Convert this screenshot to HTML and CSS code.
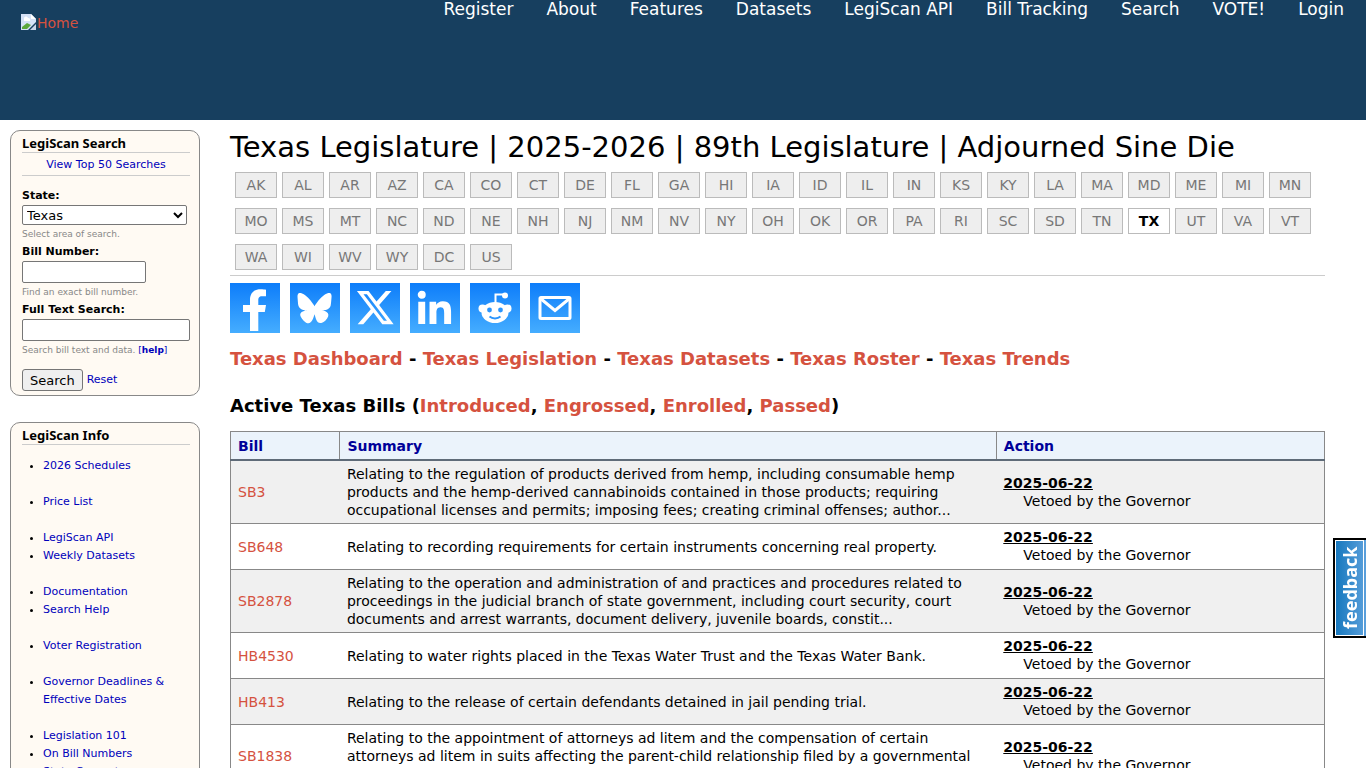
FILE: index.html
```html
<!DOCTYPE html>
<html lang="en">
<head>
    <meta charset="UTF-8">
    <meta name="viewport" content="width=device-width, initial-scale=1.0">
    <title>Texas Legislature | 2025-2026 | 89th Legislature | LegiScan</title>
    <link rel="stylesheet" href="styles.css">
</head>
<body>

<header class="header">
    <a class="logo" href="/">
        <svg width="16" height="16" viewBox="0 0 16 16" aria-hidden="true">
            <path d="M0 0h10l5 5v3l-8 8H0z" fill="#d5e2f7"/>
            <path d="M10 0v5h5z" fill="#fff"/>
            <path d="M3 5a2 2 0 0 1 4-1 2 2 0 0 1 2 3H3z" fill="#fff"/>
            <path d="M1 15v-2l5-4 4 2-4 4z" fill="#5ba83c"/>
            <path d="M15 10v6H9z" fill="#c9d6ea"/>
        </svg><span>Home</span>
    </a>
    <nav class="menu">
        <a href="/register">Register</a>
        <a href="/about">About</a>
        <a href="/features">Features</a>
        <a href="/datasets">Datasets</a>
        <a href="/legiscan">LegiScan API</a>
        <a href="/tracking">Bill Tracking</a>
        <a href="/search">Search</a>
        <a href="/vote">VOTE!</a>
        <a href="/login">Login</a>
    </nav>
</header>

<div class="page">
    <aside class="sidebar">
        <section class="block">
            <h2>LegiScan Search</h2>
            <a class="top-searches" href="/trends">View Top 50 Searches</a>
            <form class="search-form" action="/search">
                <label for="state">State:</label>
                <select id="state">
                    <option>Texas</option>
                </select>
                <p class="hint">Select area of search.</p>

                <label for="bill">Bill Number:</label>
                <input class="short" type="text" id="bill">
                <p class="hint">Find an exact bill number.</p>

                <label for="fulltext">Full Text Search:</label>
                <input type="text" id="fulltext">
                <p class="hint">Search bill text and data. <a href="/help">[<b>help</b>]</a></p>

                <div class="actions">
                    <button type="submit">Search</button>
                    <a href="/reset">Reset</a>
                </div>
            </form>
        </section>

        <section class="block">
            <h2>LegiScan Info</h2>
            <ul>
                <li><a href="#">2026 Schedules</a></li>
            </ul>
            <ul>
                <li><a href="#">Price List</a></li>
            </ul>
            <ul>
                <li><a href="#">LegiScan API</a></li>
                <li><a href="#">Weekly Datasets</a></li>
            </ul>
            <ul>
                <li><a href="#">Documentation</a></li>
                <li><a href="#">Search Help</a></li>
            </ul>
            <ul>
                <li><a href="#">Voter Registration</a></li>
            </ul>
            <ul>
                <li><a href="#">Governor Deadlines &amp; Effective Dates</a></li>
            </ul>
            <ul>
                <li><a href="#">Legislation 101</a></li>
                <li><a href="#">On Bill Numbers</a></li>
                <li><a href="#">State Converters</a></li>
            </ul>
        </section>
    </aside>

    <main class="content">
        <h1>Texas Legislature | 2025-2026 | 89th Legislature | Adjourned Sine Die</h1>

        <nav class="states">
            <a href="/AK">AK</a>
            <a href="/AL">AL</a>
            <a href="/AR">AR</a>
            <a href="/AZ">AZ</a>
            <a href="/CA">CA</a>
            <a href="/CO">CO</a>
            <a href="/CT">CT</a>
            <a href="/DE">DE</a>
            <a href="/FL">FL</a>
            <a href="/GA">GA</a>
            <a href="/HI">HI</a>
            <a href="/IA">IA</a>
            <a href="/ID">ID</a>
            <a href="/IL">IL</a>
            <a href="/IN">IN</a>
            <a href="/KS">KS</a>
            <a href="/KY">KY</a>
            <a href="/LA">LA</a>
            <a href="/MA">MA</a>
            <a href="/MD">MD</a>
            <a href="/ME">ME</a>
            <a href="/MI">MI</a>
            <a href="/MN">MN</a>
            <a href="/MO">MO</a>
            <a href="/MS">MS</a>
            <a href="/MT">MT</a>
            <a href="/NC">NC</a>
            <a href="/ND">ND</a>
            <a href="/NE">NE</a>
            <a href="/NH">NH</a>
            <a href="/NJ">NJ</a>
            <a href="/NM">NM</a>
            <a href="/NV">NV</a>
            <a href="/NY">NY</a>
            <a href="/OH">OH</a>
            <a href="/OK">OK</a>
            <a href="/OR">OR</a>
            <a href="/PA">PA</a>
            <a href="/RI">RI</a>
            <a href="/SC">SC</a>
            <a href="/SD">SD</a>
            <a href="/TN">TN</a>
            <a class="active" href="/TX">TX</a>
            <a href="/UT">UT</a>
            <a href="/VA">VA</a>
            <a href="/VT">VT</a>
            <a href="/WA">WA</a>
            <a href="/WI">WI</a>
            <a href="/WV">WV</a>
            <a href="/WY">WY</a>
            <a href="/DC">DC</a>
            <a href="/US">US</a>
        </nav>

        <div class="share">
            <a href="#" aria-label="Facebook">
                <svg viewBox="0 0 50 50"><path d="M20 48V29h-7v-7h7v-5c0-7 4-10.700 10.500-10.700 2.500 0 4.500.2 5.500.4v6.500h-4c-3 0-3.700 1.700-3.700 4V22h7.700l-1.200 7h-6.500v19z"/></svg>
            </a>
            <a href="#" aria-label="Bluesky">
                <svg viewBox="0 0 50 50"><path transform="translate(7.500 8) scale(1.420)" d="M12 10.8c-1.087-2.114-4.046-6.053-6.798-7.995C2.566.944 1.561 1.266.902 1.565.139 1.908 0 3.08 0 3.768c0 .69.378 5.65.624 6.479.815 2.736 3.713 3.66 6.383 3.364.136-.02.275-.039.415-.056-.138.022-.276.04-.415.056-3.912.58-7.387 2.005-2.83 7.078 5.013 5.19 6.87-1.113 7.823-4.308.953 3.195 2.05 9.271 7.733 4.308 4.267-4.308 1.172-6.498-2.74-7.078a8.741 8.741 0 0 1-.415-.056c.14.017.279.036.415.056 2.67.297 5.568-.628 6.383-3.364.246-.828.624-5.79.624-6.478 0-.69-.139-1.861-.902-2.206-.659-.298-1.664-.62-4.3 1.24C16.046 4.748 13.087 8.687 12 10.8Z"/></svg>
            </a>
            <a href="#" aria-label="X">
                <svg viewBox="0 0 50 50"><path transform="translate(4.800 4.200) scale(1.700)" d="M18.244 2.25h3.308l-7.227 8.26 8.502 11.24H16.17l-5.214-6.817L4.99 21.75H1.68l7.73-8.835L1.254 2.25H8.08l4.713 6.231zm-1.161 17.52h1.833L7.084 4.126H5.117z"/></svg>
            </a>
            <a href="#" aria-label="LinkedIn">
                <svg viewBox="0 0 50 50"><path transform="translate(-2 -2) scale(1.650)" d="M6.227 12.61h4.19v13.48h-4.19zm2.095-6.7a2.43 2.43 0 0 1 0 4.86c-1.344 0-2.428-1.09-2.428-2.43s1.084-2.43 2.428-2.43m4.72 6.7h4.02v1.84h.058c.56-1.058 1.927-2.176 3.965-2.176 4.238 0 5.02 2.792 5.02 6.42v7.395h-4.183v-6.56c0-1.564-.03-3.574-2.178-3.574-2.18 0-2.514 1.7-2.514 3.46v6.668h-4.187z"/></svg>
            </a>
            <a href="#" aria-label="Reddit">
                <svg viewBox="0 0 50 50">
                    <circle cx="12.500" cy="25.500" r="4"/>
                    <circle cx="37.500" cy="25.500" r="4"/>
                    <ellipse cx="25" cy="29.500" rx="13.500" ry="10.500"/>
                    <circle cx="35" cy="12.500" r="3"/>
                    <path class="line" d="M25.500 20v-8.500h8"/>
                    <circle class="hole" cx="19.500" cy="27" r="2.400"/>
                    <circle class="hole" cx="30.500" cy="27" r="2.400"/>
                    <path class="smile" d="M19.500 33.500c3 2.500 8 2.500 11 0"/>
                </svg>
            </a>
            <a href="#" aria-label="Email">
                <svg viewBox="0 0 50 50">
                    <rect class="line thick" x="10" y="14.500" width="30" height="21" rx="1"/>
                    <path class="line thick" d="M10.500 15.500L25 27.500l14.500-12"/>
                </svg>
            </a>
        </div>

        <h3 class="sections">
            <a href="#">Texas Dashboard</a> - <a href="#">Texas Legislation</a> - <a href="#">Texas Datasets</a> - <a href="#">Texas Roster</a> - <a href="#">Texas Trends</a>
        </h3>

        <h3>Active Texas Bills (<a href="#">Introduced</a>, <a href="#">Engrossed</a>, <a href="#">Enrolled</a>, <a href="#">Passed</a>)</h3>

        <table class="bills">
            <thead>
                <tr>
                    <th class="col-bill">Bill</th>
                    <th class="col-summary">Summary</th>
                    <th class="col-action">Action</th>
                </tr>
            </thead>
            <tbody>
                <tr>
                    <td><a href="#">SB3</a></td>
                    <td>Relating to the regulation of products derived from hemp, including consumable hemp products and the hemp-derived cannabinoids contained in those products; requiring occupational licenses and permits; imposing fees; creating criminal offenses; author...</td>
                    <td><b class="date">2025-06-22</b><div class="status">Vetoed by the Governor</div></td>
                </tr>
                <tr>
                    <td><a href="#">SB648</a></td>
                    <td>Relating to recording requirements for certain instruments concerning real property.</td>
                    <td><b class="date">2025-06-22</b><div class="status">Vetoed by the Governor</div></td>
                </tr>
                <tr>
                    <td><a href="#">SB2878</a></td>
                    <td>Relating to the operation and administration of and practices and procedures related to proceedings in the judicial branch of state government, including court security, court documents and arrest warrants, document delivery, juvenile boards, constit...</td>
                    <td><b class="date">2025-06-22</b><div class="status">Vetoed by the Governor</div></td>
                </tr>
                <tr>
                    <td><a href="#">HB4530</a></td>
                    <td>Relating to water rights placed in the Texas Water Trust and the Texas Water Bank.</td>
                    <td><b class="date">2025-06-22</b><div class="status">Vetoed by the Governor</div></td>
                </tr>
                <tr>
                    <td><a href="#">HB413</a></td>
                    <td>Relating to the release of certain defendants detained in jail pending trial.</td>
                    <td><b class="date">2025-06-22</b><div class="status">Vetoed by the Governor</div></td>
                </tr>
                <tr>
                    <td><a href="#">SB1838</a></td>
                    <td>Relating to the appointment of attorneys ad litem and the compensation of certain attorneys ad litem in suits affecting the parent-child relationship filed by a governmental entity.</td>
                    <td><b class="date">2025-06-22</b><div class="status">Vetoed by the Governor</div></td>
                </tr>
            </tbody>
        </table>
    </main>
</div>

<button class="feedback" type="button">feedback</button>

</body>
</html>
```

FILE: styles.css
```css
* {
    box-sizing: border-box;
}
html {
    height: 100%;
    overflow: hidden;
}
body {
    margin: 0;
    font-family: Verdana, "DejaVu Sans", sans-serif;
    font-size: 14px;
    line-height: 18px;
    color: #000;
    background-color: #fff;
}
a {
    color: #d5523f;
    text-decoration: none;
}
.header {
    display: flex;
    justify-content: space-between;
    align-items: flex-start;
    height: 120px;
    padding: 0 22px 0 21px;
    background-color: #173f5f;
}
.logo {
    display: flex;
    margin-top: 14px;
}
.menu {
    display: flex;
    gap: 33px;
    font-size: 17px;
}
.menu a {
    color: #fff;
}
.page {
    display: flex;
    gap: 30px;
    padding: 10px 41px 0 10px;
}
.sidebar {
    flex: 0 0 190px;
    font-size: 11px;
}
.sidebar a {
    color: #0000bb;
}
.block {
    padding: 3px 9px 4px 11px;
    margin-bottom: 26px;
    border: 1px solid #888;
    border-radius: 10px;
    background-color: #fffaf3;
}
.block h2 {
    margin: 0;
    font-family: "Noto Sans", sans-serif;
    font-size: 13px;
    line-height: 18px;
    border-bottom: 1px solid #ccc;
}
.top-searches {
    display: block;
    padding: 3px 0 1px;
    border-bottom: 1px solid #ccc;
    text-align: center;
}
.search-form {
    margin-top: 11px;
}
.search-form label {
    display: block;
    font-weight: bold;
    line-height: 18px;
}
.search-form select,
.search-form input {
    display: block;
    width: 100%;
    border: 1px solid #767676;
    border-radius: 2px;
    background-color: #fff;
    font-family: inherit;
    font-size: 13px;
}
.search-form select {
    width: 165px;
    height: 20px;
}
.search-form input {
    height: 22px;
}
.search-form .short {
    width: 124px;
}
.hint {
    margin: 0;
    font-size: 9px;
    line-height: 18px;
    color: #888;
}
.actions {
    display: flex;
    align-items: center;
    gap: 4px;
    margin-top: 10px;
}
.actions button {
    height: 22px;
    padding: 0 7px;
    border: 1px solid #767676;
    border-radius: 3px;
    background-color: #efefef;
    font-family: inherit;
    font-size: 13px;
}
.block ul {
    margin: 0 0 18px;
    padding-left: 21px;
}
.block h2 + ul {
    margin-top: 12px;
}
.content {
    flex: 1;
    min-width: 0;
}
h1 {
    margin: 0;
    font-size: 29px;
    font-weight: normal;
    line-height: 34px;
}
.states {
    display: flex;
    flex-wrap: wrap;
    gap: 10px 5px;
    padding: 8px 5px 5px;
    border-bottom: 1px solid #ccc;
}
.states a {
    width: 42px;
    height: 26px;
    border: 1px solid #bbb;
    background-color: #eee;
    color: #777;
    line-height: 24px;
    text-align: center;
}
.states .active {
    background-color: #fff;
    color: #000;
    font-weight: bold;
}
.share {
    display: flex;
    gap: 10px;
    margin: 7px 0 16px;
}
.share a {
    width: 50px;
    height: 50px;
    background: linear-gradient(#0d7dfa, #45adff);
}
.share svg {
    display: block;
    fill: #fff;
}
.share .line {
    fill: none;
    stroke: #fff;
    stroke-width: 2;
}
.share .thick {
    stroke-width: 3;
}
.share .hole {
    fill: #2b95fd;
}
.share .smile {
    fill: none;
    stroke: #2b95fd;
    stroke-width: 2;
}
h3 {
    margin: 0;
    font-size: 18px;
    line-height: 20px;
}
.sections {
    margin-bottom: 27px;
}
.bills {
    width: 100%;
    margin-top: 15px;
    border-collapse: collapse;
    table-layout: fixed;
    border: 1px solid #888;
}
.bills th {
    padding: 5px 7px 4px;
    border: 1px solid #888;
    border-bottom: 2px solid #5f6b78;
    background-color: #ebf3fb;
    color: #000099;
    text-align: left;
}
.bills td {
    padding: 4px 7px;
    border-bottom: 1px solid #888;
}
.bills tbody tr:nth-child(odd) {
    background-color: #f0f0f0;
}
.col-bill {
    width: 10%;
}
.col-summary {
    width: 60%;
}
.col-action {
    width: 30%;
}
.date {
    text-decoration: underline;
}
.status {
    padding: 0 0 1px 20px;
}
.feedback {
    position: fixed;
    top: 538px;
    right: 0;
    width: 33px;
    height: 100px;
    padding: 0;
    border: 2px solid #000;
    border-left: 0;
    outline: 1px solid #fff;
    outline-offset: -3px;
    background: linear-gradient(to left, #1577bd, #5ba0dc);
    color: #fff;
    font-family: "Noto Sans", sans-serif;
    font-size: 18px;
    font-weight: bold;
    writing-mode: vertical-rl;
    transform: rotate(180deg);
}
```
